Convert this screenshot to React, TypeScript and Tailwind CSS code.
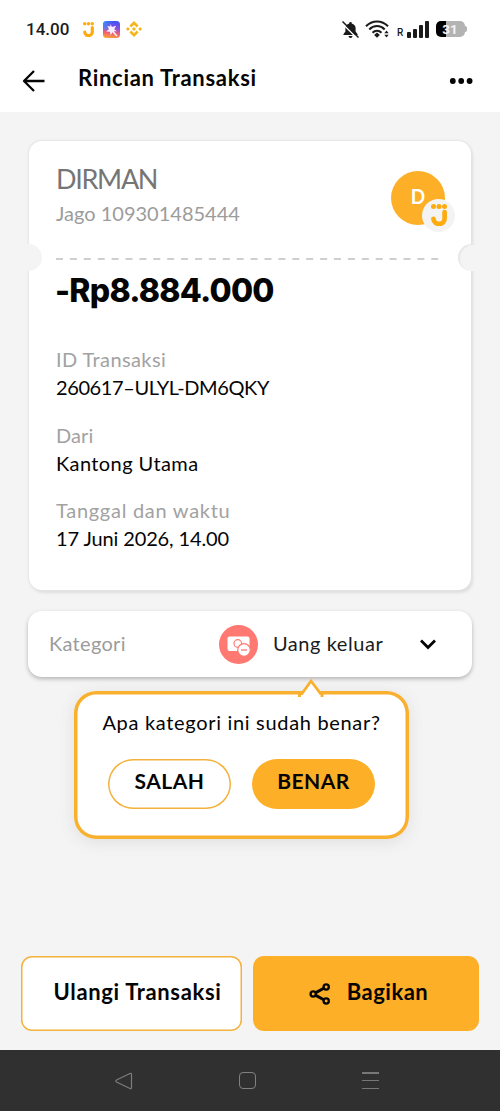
import type { ReactNode } from "react";
import clsx from "clsx";

const details = [
  { label: "ID Transaksi", value: "260617–ULYL-DM6QKY", labelClass: "tracking-[0.4px]", valueClass: "tracking-[-0.4px]" },
  { label: "Dari", value: "Kantong Utama", labelClass: "tracking-[0.1px]", valueClass: "tracking-[0.4px]" },
  { label: "Tanggal dan waktu", value: "17 Juni 2026, 14.00", labelClass: "tracking-[0.72px]", valueClass: "tracking-[-0.12px]" },
];

function JagoMark({ className }: { className?: string }) {
  return (
    <svg viewBox="0 0 16 22" className={className} fill="none">
      <circle cx="2.5" cy="2.5" r="2.5" fill="#fdab0f" />
      <circle cx="8" cy="2.5" r="2.5" fill="#fdab0f" />
      <circle cx="13.5" cy="2.5" r="2.5" fill="#fdab0f" />
      <path d="M13.6 8.2v5.6a5.6 5.6 0 0 1-11.2 1" stroke="#fdab0f" strokeWidth="4.7" strokeLinecap="round" />
    </svg>
  );
}

function StatusBar() {
  return (
    <div className="flex h-[56px] items-center pt-[2px] pl-[26px]">
      <span className="-mt-px w-[58px] font-['Roboto',sans-serif] text-[17px] leading-5 font-medium text-[#1c1c1c]">14.00</span>
      <JagoMark className="-ml-px h-[15px] w-[11px]" />

      <svg viewBox="0 0 17 17" className="ml-[9px] size-[17px]">
        <defs>
          <linearGradient id="app" x1="0.6" y1="0" x2="0.45" y2="1">
            <stop offset="0" stopColor="#3b55f5" />
            <stop offset="0.4" stopColor="#8a4fe0" />
            <stop offset="0.72" stopColor="#f2606c" />
            <stop offset="1" stopColor="#f8a03c" />
          </linearGradient>
          <linearGradient id="appEdge" x1="0" y1="0.4" x2="0.5" y2="0.5">
            <stop offset="0" stopColor="#2f9bff" stopOpacity="0.8" />
            <stop offset="1" stopColor="#2f9bff" stopOpacity="0" />
          </linearGradient>
        </defs>
        <rect width="17" height="17" rx="3.5" fill="url(#app)" />
        <rect width="17" height="9" rx="3.5" fill="url(#appEdge)" />
        <path d="M7.600 3l1.300 3 4.300-1.300-2 3.600 2.600 1.900-3 .1 3.600 4.100-1 1-4-4.200-1.700 3.100-.8-3.600-3.900-.1 3-2.300L4.300 5l3 .6z" fill="#f4f0ff" />
      </svg>

      <svg viewBox="0 0 16 16" className="ml-[6px] size-4" fill="#f3b71b">
        <path d="M8 0l4.600 4.600-1.900 1.900L8 3.800 5.300 6.500 3.400 4.600zM8 16l4.600-4.600-1.900-1.900L8 12.200 5.300 9.500l-1.900 1.900zM8 6l2 2-2 2-2-2zM1.900 6.100L3.800 8 1.900 9.900 0 8zM14.100 6.100L16 8l-1.900 1.900L12.200 8z" />
      </svg>

      {/* silent, wifi, signal, battery */}
      <svg viewBox="0 0 17 17" className="ml-[200px] size-[17px]">
        <path d="M8.500 1a1.300 1.300 0 0 1 1.300 1.400c2.300.6 3.800 2.300 3.800 4.600v3.600l2 2.600v.7H1.400v-.7l2-2.600V7c0-2.300 1.500-4 3.800-4.600A1.300 1.300 0 0 1 8.500 1zM6.500 15h4a2 2 0 0 1-4 0z" fill="#1b1b1b" />
        <path d="M0 2.200L15 17" stroke="#fff" strokeWidth="1.500" />
        <path d="M.5.500l16 16" stroke="#1b1b1b" strokeWidth="1.500" />
      </svg>
      <svg viewBox="0 0 24 18" className="ml-[6px] h-[18px] w-6" fill="none" stroke="#1b1b1b" strokeWidth="2">
        <path d="M1 6.300C7-.2 17-.2 23 6.300M4.300 9.500c4.300-4.600 11.100-4.600 15.400 0M7.500 12.700c2.500-2.700 6.500-2.700 9 0" />
        <path d="M12 12.600l2.900 2.400L12 17.700 9.100 15z" fill="#1b1b1b" stroke="none" />
        <path d="M21.500 10.500l2.200 2.700h-4.400zM21.500 17.500l2.200-2.700h-4.400z" fill="#1b1b1b" stroke="none" />
      </svg>
      <span className="mt-[8px] ml-[8px] w-[9px] font-['Roboto',sans-serif] text-[10px] leading-none font-medium text-[#1b1b1b]">R</span>
      <div className="ml-px flex h-[17px] items-end gap-[2.500px]">
        <i className="h-[6px] w-[3.500px] rounded-[1px] bg-[#1b1b1b]" />
        <i className="h-[9px] w-[3.500px] rounded-[1px] bg-[#1b1b1b]" />
        <i className="h-[13px] w-[3.500px] rounded-[1px] bg-[#1b1b1b]" />
        <i className="h-[17px] w-[3.500px] rounded-[1px] bg-[#1b1b1b]" />
      </div>
      <div className="relative ml-[7px] h-4 w-[31px]">
        <div className="flex h-4 w-[29px] items-center justify-center overflow-hidden rounded-[5px] bg-linear-to-r from-black from-34% to-[#b3b3b3] to-34%">
          <span className="font-['Roboto',sans-serif] text-[13.500px] leading-4 font-bold text-[#f4f4f4]">31</span>
        </div>
        <i className="absolute top-[5px] right-0 h-[6px] w-[2px] rounded-r bg-[#b3b3b3]" />
      </div>
    </div>
  );
}

function Header() {
  return (
    <header className="flex h-[56px] items-center bg-white pb-[9px] pl-[22px]">
      <svg viewBox="0 0 24 24" className="mt-px size-6" fill="none" stroke="#050505" strokeWidth="2.300">
        <path d="M22.500 13H2M12 3L2 13l10 10" strokeLinejoin="round" />
      </svg>
      <h1 className="-mt-[4px] ml-[32px] w-[371px] text-[22px] leading-7 font-bold tracking-[0.700px]">Rincian Transaksi</h1>
      <svg viewBox="0 0 24 6" className="mt-[3px] h-[6px] w-6 shrink-0" fill="#050505">
        <circle cx="3.800" cy="3" r="2.900" />
        <circle cx="12.200" cy="3" r="2.900" />
        <circle cx="20.600" cy="3" r="2.900" />
      </svg>
    </header>
  );
}

function Avatar() {
  return (
    <div className="relative flex size-[54px] items-center justify-center rounded-full bg-[#fdaf28] text-[21px] font-bold text-white">
      <span className="-mt-[4px] -ml-px inline-block scale-x-90">D</span>
      <div className="absolute top-[28px] left-[31px] flex size-[33px] items-center justify-center rounded-full bg-[#f3f3f3]">
        <JagoMark className="-mt-px h-[22px] w-4" />
      </div>
    </div>
  );
}

function Ticket() {
  return (
    <section className="relative mx-[29px] mt-[29px] h-[449px] rounded-[13px] bg-white pl-[27px] shadow-[0_0_2px_1px_#e4e4e4,2px_3px_3px_#dedede]">
      <div className="flex h-[117px] justify-between pt-[24px] pr-[26px]">
        <div>
          <p className="text-[27px] leading-[28px] tracking-[-1.300px] text-[#757575]">DIRMAN</p>
          <p className="mt-[7px] text-[20px] leading-[26px] text-[#9c9c9c]">Jago 109301485444</p>
        </div>
        <div className="mt-[6px]">
          <Avatar />
        </div>
      </div>

      <svg className="block h-[2px] w-[383px]">
        <path d="M0 1h383" stroke="#cfcfcf" strokeWidth="1.800" strokeDasharray="7 6.900" />
      </svg>
      {/* notches punched into both sides */}
      <div className="absolute top-[103px] -left-[14px] size-[27px] rounded-full bg-[#f4f4f4]" />
      <div className="absolute top-[103px] -right-[14px] size-[27px] rounded-full bg-[#f4f4f4] shadow-[inset_2px_1px_1px_#e8e8e8]" />
      <div className="absolute top-[104px] -left-[15px] h-[26px] w-[14px] bg-[#f4f4f4]" />
      <div className="absolute top-[104px] -right-[15px] h-[26px] w-[18px] bg-[#f4f4f4]" />

      <p className="mt-[11px] -ml-px font-['Inter',sans-serif] text-[32px] leading-10 font-extrabold tracking-[-0.750px]">-Rp8.884.000</p>

      <dl className="mt-[34px] text-[20px]">
        {details.map((d) => (
          <div key={d.label} className="h-[75.500px]">
            <dt className={clsx("h-7 leading-7 text-[#a2a2a2]", d.labelClass)}>{d.label}</dt>
            <dd className={clsx("h-7 leading-7", d.valueClass)}>{d.value}</dd>
          </div>
        ))}
      </dl>
    </section>
  );
}

function Category() {
  return (
    <section className="mx-[28px] mt-[21px] flex h-[66px] items-center rounded-[14px] bg-white pl-[21px] shadow-[0_2px_4px_#b5b5b5]">
      <span className="-mt-[3px] w-[170px] text-[20px] tracking-[0.300px] text-[#9c9c9c]">Kategori</span>
      <svg viewBox="0 0 39 39" className="size-[39px]">
        <circle cx="19.500" cy="19.500" r="19.500" fill="#ff7972" />
        <rect x="8.500" y="11.500" width="22" height="14.500" rx="2" fill="#fff" />
        <circle cx="18.800" cy="18.500" r="3.800" fill="none" stroke="#ff7972" strokeWidth="1.200" />
        <circle cx="25" cy="25" r="6.300" fill="#fff" stroke="#ff7972" strokeWidth="1.200" />
        <path d="M22 25h6" stroke="#ff7972" strokeWidth="1.300" />
      </svg>
      <span className="-mt-[3px] ml-[15px] w-[147px] text-[20px] tracking-[0.570px] text-[#1b1b1b]">Uang keluar</span>
      <svg viewBox="0 0 16 11" className="h-[11px] w-4" fill="none" stroke="#050505" strokeWidth="2.800">
        <path d="M1 1.500l7 7 7-7" />
      </svg>
    </section>
  );
}

function CategoryPrompt() {
  return (
    <section className="relative mt-[14px] ml-[74px] h-[148px] w-[335px] rounded-[22px] bg-white text-center shadow-[inset_0_0_0_3.500px_#f9b02f,0_3px_16px_#dfdfdf]">
      <svg viewBox="0 0 28 20" className="absolute -top-[14px] left-[223px] h-5 w-7">
        <path d="M4 20V16L14 3l10 13v4z" fill="#fff" />
        <path d="M1 19.500h1.500V16.500H5L14 4l9.500 12.500H25v3h1.500" fill="none" stroke="#f9b02f" strokeWidth="2.800" />
      </svg>
      <p className="pt-[17px] text-[20px] leading-7 tracking-[0.680px]">Apa kategori ini sudah benar?</p>
      <div className="mt-[23px] flex justify-center gap-[21px]">
        <button className="h-[50px] w-[123px] rounded-full pb-[6px] text-[21px] font-bold tracking-[0.500px] shadow-[inset_0_0_0_1.500px_#f4b13c]">SALAH</button>
        <button className="h-[50px] w-[123px] rounded-full bg-[#fdaf28] pb-[6px] text-[21px] font-bold tracking-[0.500px]">BENAR</button>
      </div>
    </section>
  );
}

function ActionButton({ className, children }: { className?: string; children: ReactNode }) {
  return (
    <button className={clsx("flex h-[75px] items-center justify-center rounded-[11px] pb-[4px] text-[22px] font-bold", className)}>
      {children}
    </button>
  );
}

function Actions() {
  return (
    <div className="mt-auto flex h-[94px] gap-[11px] pl-[21px]">
      <ActionButton className="w-[221px] bg-white pl-[12px] tracking-[0.650px] shadow-[inset_0_0_0_1.500px_#f4b13c]">Ulangi Transaksi</ActionButton>
      <ActionButton className="w-[226px] bg-[#fdaf28] pl-[5px] tracking-[0.500px]">
        <svg viewBox="0 0 22 22" className="mt-[4px] mr-[16px] size-[22px]" fill="none" stroke="#050505" strokeWidth="2.300">
          <circle cx="4.200" cy="11" r="2.600" />
          <circle cx="17.200" cy="4" r="2.600" />
          <circle cx="17.200" cy="18" r="2.600" />
          <path d="M6.800 9.600l8-4.300M6.800 12.400l8 4.300" strokeWidth="2.900" />
        </svg>
        Bagikan
      </ActionButton>
    </div>
  );
}

function SystemNav() {
  return (
    <nav className="flex h-[61px] items-center bg-[#303030] pl-[115px]">
      <svg viewBox="0 0 18 18" className="size-[18px]" fill="none" stroke="#7d7d7d" strokeWidth="1.200">
        <path d="M15.500 1.300L1.500 8q-1.300 1 0 2l14 6.700q1 .2 1-1V2.200q0-1-1-.9z" />
      </svg>
      <div className="ml-[106px] size-[17px] rounded-[4px] border border-[#808080]" />
      <div className="ml-[106px] flex h-[17px] w-[17px] flex-col justify-between">
        <i className="h-[1.500px] bg-[#777]" />
        <i className="h-[1.500px] bg-[#777]" />
        <i className="h-[1.500px] bg-[#777]" />
      </div>
    </nav>
  );
}

export default function App() {
  return (
    <div className="flex h-[1111px] w-[500px] flex-col overflow-hidden bg-[#f4f4f4] font-['Lato','Liberation_Sans',sans-serif] text-[#050505]">
      <div className="bg-white">
        <StatusBar />
        <Header />
      </div>
      <Ticket />
      <Category />
      <CategoryPrompt />
      <Actions />
      <SystemNav />
    </div>
  );
}
